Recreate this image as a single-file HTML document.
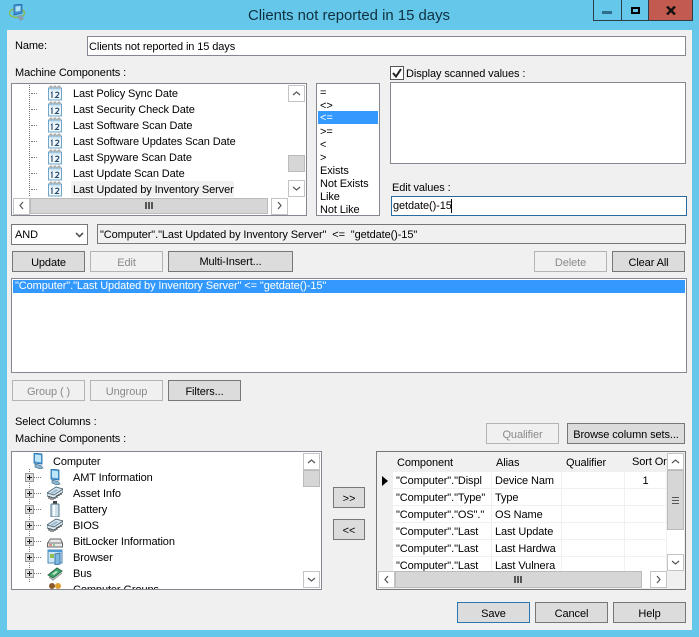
<!DOCTYPE html>
<html><head><meta charset="utf-8"><style>
html,body{margin:0;padding:0}
body{width:699px;height:637px;overflow:hidden;position:relative;background:#65c8ea;font:11px/13px "Liberation Sans",sans-serif;letter-spacing:-.1px;color:#000}
div,span,svg{position:absolute;box-sizing:border-box}
.t{white-space:nowrap}
.w{background:#fff;border:1px solid #828790}
.b{background:#dcdcdc;border:1px solid #777;text-align:center;line-height:23px;height:21px;white-space:nowrap}
.d{background:#f0f0f0;border-color:#b4b4b4;color:#8a8a8a}
.sb{background:#fff;border:1px solid #c4c4c4}
.th{background:#d6d6d6;border:1px solid #bbb}
.hl{background:#3399ff;color:#fff}
.v{border-left:1px dotted #777;width:1px}
.h{border-top:1px dotted #777;height:1px;width:6px}
.p{width:9px;height:9px;background:#dedede;border:1px solid #999}
.p:before{content:"";position:absolute;left:1px;top:3px;width:5px;height:1px;background:#222}
.p:after{content:"";position:absolute;left:3px;top:1px;height:5px;width:1px;background:#222}
.c{border-right:1px solid #f0f0f0;border-bottom:1px solid #f0f0f0;background:#fff;height:17px;overflow:hidden;white-space:nowrap;line-height:18px;padding-left:3px}
</style></head><body>
<svg width="0" height="0" style="left:0;top:0"><defs>
<symbol id="cal" viewBox="0 0 16 16"><rect x="1.500" y="3" width="13" height="12" fill="#eef7fc" stroke="#6fa5c6"/><rect x="2" y="3.500" width="12" height="2" fill="#cfe5f3"/><path d="M3 3V2q0-1 1-1t1 1v1M7 3V2q0-1 1-1t1 1v1M11 3V2q0-1 1-1t1 1v1" fill="none" stroke="#999"/><path d="M4 8l1-.8V13M8.500 8q.3-.8 1.700-.8t1.700 1.200q0 1-3.400 4.100h3.600" fill="none" stroke="#2c4a68" stroke-width="1.100"/></symbol>
<symbol id="mon" viewBox="0 0 16 16"><path d="M4 0l8 1v10l-8-1z" fill="#4a9fdc" stroke="#2c6a9c" stroke-width=".8"/><path d="M5 1.500l6 .8v7l-6-.8z" fill="#bfe6f8"/><path d="M5 11l6 1.500 2 2.500-3 1-5-2z" fill="#8fb7d0" stroke="#4a7895" stroke-width=".7"/></symbol>
<symbol id="chip" viewBox="0 0 16 16"><path d="M0 8l9-6 7 2v3l-9 6-7-2z" fill="#e4ebf0" stroke="#52707f"/><path d="M0 8l7 2 9-6" fill="none" stroke="#52707f"/><path d="M2 11v3M4 12v3M6 13v2M8 12v2M10 10v3M12 9v2M14 8v2" stroke="#333"/><path d="M3 8l6-4 3 1-6 4z" fill="#9fc0d4"/></symbol>
<symbol id="bat" viewBox="0 0 16 16"><rect x="6" y="0" width="4" height="3" fill="#444"/><rect x="4" y="3" width="8" height="13" rx="1" fill="#cfdfe8" stroke="#557a90"/><rect x="6" y="4" width="2" height="11" fill="#f5fafc"/></symbol>
<symbol id="drv" viewBox="0 0 16 16"><path d="M.5 10l3-4h10l2 4v4H.5z" fill="#e8e8e8" stroke="#666"/><path d="M.5 10h15" stroke="#777"/><path d="M2 12h3" stroke="#c33"/><path d="M6 12h2" stroke="#3a3"/></symbol>
<symbol id="brw" viewBox="0 0 16 16"><rect x="1" y="1" width="14" height="13" fill="#cfe6f5" stroke="#4c87b3"/><rect x="1" y="1" width="14" height="2" fill="#4c9ad4"/><rect x="3" y="5" width="4" height="4" fill="#8cc152"/><path d="M8 5l5-1v11l-5 1z" fill="#7db8e0" stroke="#3d7aa8"/></symbol>
<symbol id="bus" viewBox="0 0 16 16"><path d="M1 10l9-7 5 3-9 7z" fill="#3fa66b" stroke="#2c6b49"/><path d="M5 9l4-3 2 1-4 3z" fill="#bfe3cd"/><path d="M2 12l4 3 9-7" fill="none" stroke="#888"/></symbol>
</defs></svg>

<!-- title bar -->
<svg style="left:9px;top:4px" width="17" height="18" viewBox="0 0 17 18"><ellipse cx="8" cy="9" rx="7.500" ry="4.500" fill="none" stroke="#8fb84a" stroke-width="1.300"/><path d="M5 1l8-1v9l-8 2z" fill="#3f8fd2" stroke="#27639b" stroke-width=".7"/><path d="M6.500 2.500l5-.6v5l-5 .8z" fill="#aee0f6"/><path d="M8 12l5-1 2 4-4 2z" fill="#8a9eb0"/></svg>
<div class="t" style="left:248px;top:8px;font-size:14.9px;letter-spacing:0;line-height:17px;color:#10303f">Clients not reported in 15 days</div>
<div style="left:593px;top:-1px;width:100px;height:22px;border:1px solid #2c3e4a;background:#65c8ea"></div>
<div style="left:621px;top:0;width:1px;height:20px;background:#2c3e4a"></div>
<div style="left:648px;top:0;width:45px;height:21px;background:#c35a50;border:1px solid #2c3e4a;border-top:0"></div>
<div style="left:602px;top:11px;width:10px;height:3px;background:#2f6f8c"></div>
<div style="left:631px;top:7px;width:9px;height:7px;border:2px solid #000"></div>
<svg style="left:666px;top:6px" width="10" height="9" viewBox="0 0 10 9"><path d="M1 .5l8 8M9 .5l-8 8" stroke="#111" stroke-width="2.400"/></svg>

<!-- client -->
<div style="left:7px;top:30px;width:685px;height:600px;background:#f0f0f0"></div>

<div class="t" style="left:15px;top:40px">Name:</div>
<div class="w" style="left:87px;top:36px;width:599px;height:20px"></div>
<div class="t" style="left:89px;top:41px">Clients not reported in 15 days</div>
<div class="t" style="left:15px;top:67px">Machine Components :</div>

<!-- tree 1 -->
<div class="w" style="left:11px;top:83px;width:296px;height:133px"></div>
<div class="v" style="left:29px;top:85px;height:113px"></div>
<div class="h" style="left:31px;top:93px"></div><div class="h" style="left:31px;top:109px"></div><div class="h" style="left:31px;top:125px"></div><div class="h" style="left:31px;top:141px"></div><div class="h" style="left:31px;top:157px"></div><div class="h" style="left:31px;top:173px"></div><div class="h" style="left:31px;top:189px"></div>
<svg style="left:47px;top:85px" width="16" height="16"><use href="#cal"/></svg>
<svg style="left:47px;top:101px" width="16" height="16"><use href="#cal"/></svg>
<svg style="left:47px;top:117px" width="16" height="16"><use href="#cal"/></svg>
<svg style="left:47px;top:133px" width="16" height="16"><use href="#cal"/></svg>
<svg style="left:47px;top:149px" width="16" height="16"><use href="#cal"/></svg>
<svg style="left:47px;top:165px" width="16" height="16"><use href="#cal"/></svg>
<svg style="left:47px;top:181px" width="16" height="16"><use href="#cal"/></svg>
<div style="left:71px;top:181px;width:163px;height:16px;background:#f0f0f0"></div>
<div class="t" style="left:73px;top:88px">Last Policy Sync Date</div>
<div class="t" style="left:73px;top:104px">Last Security Check Date</div>
<div class="t" style="left:73px;top:120px">Last Software Scan Date</div>
<div class="t" style="left:73px;top:136px">Last Software Updates Scan Date</div>
<div class="t" style="left:73px;top:152px">Last Spyware Scan Date</div>
<div class="t" style="left:73px;top:168px">Last Update Scan Date</div>
<div class="t" style="left:73px;top:184px">Last Updated by Inventory Server</div>
<!-- tree1 v scroll -->
<div style="left:288px;top:85px;width:17px;height:112px;background:#fff"></div>
<div class="sb" style="left:288px;top:85px;width:17px;height:17px"></div>
<div class="th" style="left:288px;top:155px;width:17px;height:17px"></div>
<div class="sb" style="left:288px;top:180px;width:17px;height:17px"></div>
<svg style="left:292px;top:91px" width="9" height="5"><path d="M1 4l3.500-3L8 4" fill="none" stroke="#555" stroke-width="1.200"/></svg>
<svg style="left:292px;top:186px" width="9" height="5"><path d="M1 1l3.500 3L8 1" fill="none" stroke="#555" stroke-width="1.200"/></svg>
<!-- tree1 h scroll -->
<div style="left:13px;top:197px;width:275px;height:17px;background:#fff"></div>
<div class="sb" style="left:13px;top:198px;width:17px;height:17px"></div>
<div class="th" style="left:30px;top:198px;width:238px;height:16px"></div>
<div class="sb" style="left:271px;top:198px;width:17px;height:17px"></div>
<svg style="left:19px;top:201px" width="5" height="9"><path d="M4 1L1 4.500 4 8" fill="none" stroke="#555" stroke-width="1.200"/></svg>
<svg style="left:277px;top:201px" width="5" height="9"><path d="M1 1l3 3.500L1 8" fill="none" stroke="#555" stroke-width="1.200"/></svg>
<div style="left:145px;top:202px;width:8px;height:7px;border-left:2px solid #555;border-right:2px solid #555"></div>
<div style="left:148px;top:202px;width:2px;height:7px;background:#555"></div>

<!-- operators -->
<div class="w" style="left:316px;top:83px;width:64px;height:133px"></div>
<div class="hl" style="left:318px;top:111px;width:60px;height:13px"></div>
<div class="t" style="left:320px;top:87px">=</div>
<div class="t" style="left:320px;top:100px">&lt;&gt;</div>
<div class="t" style="left:320px;top:112px;color:#fff">&lt;=</div>
<div class="t" style="left:320px;top:126px">&gt;=</div>
<div class="t" style="left:320px;top:139px">&lt;</div>
<div class="t" style="left:320px;top:152px">&gt;</div>
<div class="t" style="left:320px;top:165px">Exists</div>
<div class="t" style="left:320px;top:178px">Not Exists</div>
<div class="t" style="left:320px;top:191px">Like</div>
<div class="t" style="left:320px;top:204px">Not Like</div>

<!-- display scanned -->
<div class="w" style="left:390px;top:66px;width:14px;height:14px;border-color:#555"></div>
<svg style="left:391px;top:67px" width="12" height="12"><path d="M2 6l3 3.500L10 2" fill="none" stroke="#222" stroke-width="2"/></svg>
<div class="t" style="left:406px;top:68px">Display scanned values :</div>
<div class="w" style="left:390px;top:82px;width:296px;height:82px"></div>
<div class="t" style="left:392px;top:182px">Edit values :</div>
<div class="w" style="left:391px;top:196px;width:296px;height:20px;border-color:#2b6a9e"></div>
<div class="t" style="left:393px;top:200px">getdate()-15</div>
<div style="left:451px;top:199px;width:1px;height:14px;background:#000"></div>

<!-- and row -->
<div class="w" style="left:11px;top:224px;width:77px;height:21px;border-color:#777"></div>
<div class="t" style="left:15px;top:229px">AND</div>
<svg style="left:75px;top:232px" width="9" height="6"><path d="M1 1l3.500 3.500L8 1" fill="none" stroke="#555" stroke-width="1.600"/></svg>
<div style="left:97px;top:224px;width:589px;height:20px;border:1px solid #777;background:#f0f0f0"></div>
<div class="t" style="left:100px;top:229px;white-space:pre">"Computer"."Last Updated by Inventory Server"  &lt;=  "getdate()-15"</div>

<div class="b" style="left:12px;top:251px;width:73px">Update</div>
<div class="b d" style="left:90px;top:251px;width:73px">Edit</div>
<div class="b" style="left:168px;top:251px;width:125px;line-height:21px">Multi-Insert...</div>
<div class="b d" style="left:534px;top:251px;width:73px">Delete</div>
<div class="b" style="left:612px;top:251px;width:73px">Clear All</div>

<div class="w" style="left:11px;top:278px;width:676px;height:95px"></div>
<div class="hl" style="left:13px;top:280px;width:672px;height:13px"></div>
<div class="t" style="left:15px;top:280px;color:#fff">"Computer"."Last Updated by Inventory Server" &lt;= "getdate()-15"</div>

<div class="b d" style="left:12px;top:380px;width:73px">Group ( )</div>
<div class="b d" style="left:90px;top:380px;width:73px">Ungroup</div>
<div class="b" style="left:168px;top:380px;width:73px">Filters...</div>

<div class="t" style="left:15px;top:416px">Select Columns :</div>
<div class="t" style="left:15px;top:433px">Machine Components :</div>
<div class="b d" style="left:486px;top:423px;width:73px">Qualifier</div>
<div class="b" style="left:567px;top:423px;width:118px">Browse column sets...</div>

<!-- tree 2 -->
<div class="w" style="left:11px;top:451px;width:311px;height:139px"></div>
<div class="v" style="left:29px;top:469px;height:119px"></div>
<svg style="left:30px;top:453px" width="16" height="16"><use href="#mon"/></svg>
<div class="t" style="left:53px;top:456px">Computer</div>
<div class="h" style="left:34px;top:477px;width:7px"></div><div class="h" style="left:34px;top:493px;width:7px"></div><div class="h" style="left:34px;top:509px;width:7px"></div><div class="h" style="left:34px;top:525px;width:7px"></div><div class="h" style="left:34px;top:541px;width:7px"></div><div class="h" style="left:34px;top:557px;width:7px"></div><div class="h" style="left:34px;top:573px;width:7px"></div>
<div class="p" style="left:25px;top:473px"></div>
<div class="p" style="left:25px;top:489px"></div>
<div class="p" style="left:25px;top:505px"></div>
<div class="p" style="left:25px;top:521px"></div>
<div class="p" style="left:25px;top:537px"></div>
<div class="p" style="left:25px;top:553px"></div>
<div class="p" style="left:25px;top:569px"></div>
<svg style="left:47px;top:469px" width="16" height="16"><use href="#mon"/></svg>
<svg style="left:47px;top:485px" width="16" height="16"><use href="#chip"/></svg>
<svg style="left:47px;top:501px" width="16" height="16"><use href="#bat"/></svg>
<svg style="left:47px;top:517px" width="16" height="16"><use href="#chip"/></svg>
<svg style="left:47px;top:533px" width="16" height="16"><use href="#drv"/></svg>
<svg style="left:47px;top:549px" width="16" height="16"><use href="#brw"/></svg>
<svg style="left:47px;top:565px" width="16" height="16"><use href="#bus"/></svg>
<div class="t" style="left:73px;top:472px">AMT Information</div>
<div class="t" style="left:73px;top:488px">Asset Info</div>
<div class="t" style="left:73px;top:504px">Battery</div>
<div class="t" style="left:73px;top:520px">BIOS</div>
<div class="t" style="left:73px;top:536px">BitLocker Information</div>
<div class="t" style="left:73px;top:552px">Browser</div>
<div class="t" style="left:73px;top:568px">Bus</div>
<div style="left:12px;top:582px;width:290px;height:7px;overflow:hidden;background:#fff">
  <div class="t" style="left:61px;top:2px">Computer Groups</div>
  <svg style="left:35px;top:0" width="16" height="16" viewBox="0 0 16 16"><circle cx="5" cy="4" r="3" fill="#8a5a2b"/><circle cx="11" cy="4" r="3" fill="#e0a030"/></svg>
</div>
<div style="left:303px;top:453px;width:17px;height:135px;background:#fff"></div>
<div class="sb" style="left:303px;top:453px;width:17px;height:17px"></div>
<div class="th" style="left:303px;top:470px;width:17px;height:17px"></div>
<div class="sb" style="left:303px;top:571px;width:17px;height:17px"></div>
<svg style="left:307px;top:459px" width="9" height="5"><path d="M1 4l3.500-3L8 4" fill="none" stroke="#555" stroke-width="1.200"/></svg>
<svg style="left:307px;top:577px" width="9" height="5"><path d="M1 1l3.500 3L8 1" fill="none" stroke="#555" stroke-width="1.200"/></svg>

<div class="b" style="left:333px;top:487px;width:32px">&gt;&gt;</div>
<div class="b" style="left:333px;top:519px;width:32px">&lt;&lt;</div>

<!-- grid -->
<div style="left:376px;top:451px;width:310px;height:139px;border:1px solid #777;background:#f0f0f0"></div>
<div class="t" style="left:397px;top:457px">Component</div>
<div class="t" style="left:496px;top:457px">Alias</div>
<div class="t" style="left:566px;top:457px">Qualifier</div>
<div style="left:632px;top:456px;width:35px;height:14px;overflow:hidden"><div class="t" style="left:0;top:0">Sort Order</div></div>
<svg style="left:382px;top:476px" width="7" height="10"><path d="M0 0l6 5-6 5z" fill="#000"/></svg>

<div style="left:377px;top:472px;width:290px;height:99px;overflow:hidden">
<div class="c" style="left:16px;top:0;width:99px">"Computer"."Displ</div><div class="c" style="left:115px;top:0;width:70px">Device Nam</div><div class="c" style="left:185px;top:0;width:63px"></div><div class="c" style="left:248px;top:0;width:42px;text-align:center;padding:0">1</div>
<div class="c" style="left:16px;top:17px;width:99px">"Computer"."Type"</div><div class="c" style="left:115px;top:17px;width:70px">Type</div><div class="c" style="left:185px;top:17px;width:63px"></div><div class="c" style="left:248px;top:17px;width:42px"></div>
<div class="c" style="left:16px;top:34px;width:99px">"Computer"."OS"."</div><div class="c" style="left:115px;top:34px;width:70px">OS Name</div><div class="c" style="left:185px;top:34px;width:63px"></div><div class="c" style="left:248px;top:34px;width:42px"></div>
<div class="c" style="left:16px;top:51px;width:99px">"Computer"."Last</div><div class="c" style="left:115px;top:51px;width:70px">Last Update</div><div class="c" style="left:185px;top:51px;width:63px"></div><div class="c" style="left:248px;top:51px;width:42px"></div>
<div class="c" style="left:16px;top:68px;width:99px">"Computer"."Last</div><div class="c" style="left:115px;top:68px;width:70px">Last Hardwa</div><div class="c" style="left:185px;top:68px;width:63px"></div><div class="c" style="left:248px;top:68px;width:42px"></div>
<div class="c" style="left:16px;top:85px;width:99px">"Computer"."Last</div><div class="c" style="left:115px;top:85px;width:70px">Last Vulnera</div><div class="c" style="left:185px;top:85px;width:63px"></div><div class="c" style="left:248px;top:85px;width:42px"></div>
</div>
<div style="left:667px;top:453px;width:17px;height:118px;background:#fff"></div>
<div class="sb" style="left:667px;top:453px;width:17px;height:17px"></div>
<div class="th" style="left:667px;top:470px;width:17px;height:60px"></div>
<div class="sb" style="left:667px;top:554px;width:17px;height:17px"></div>
<svg style="left:671px;top:459px" width="9" height="5"><path d="M1 4l3.500-3L8 4" fill="none" stroke="#555" stroke-width="1.200"/></svg>
<svg style="left:671px;top:560px" width="9" height="5"><path d="M1 1l3.500 3L8 1" fill="none" stroke="#555" stroke-width="1.200"/></svg>
<div style="left:672px;top:497px;width:7px;height:7px;border-top:1px solid #555;border-bottom:1px solid #555"></div>
<div style="left:672px;top:500px;width:7px;height:1px;background:#555"></div>
<div style="left:378px;top:571px;width:288px;height:17px;background:#fff"></div>
<div class="sb" style="left:378px;top:571px;width:17px;height:17px"></div>
<div class="th" style="left:395px;top:571px;width:247px;height:17px"></div>
<div class="sb" style="left:650px;top:571px;width:17px;height:17px"></div>
<svg style="left:384px;top:575px" width="5" height="9"><path d="M4 1L1 4.500 4 8" fill="none" stroke="#555" stroke-width="1.200"/></svg>
<svg style="left:656px;top:575px" width="5" height="9"><path d="M1 1l3 3.500L1 8" fill="none" stroke="#555" stroke-width="1.200"/></svg>
<div style="left:514px;top:576px;width:8px;height:7px;border-left:2px solid #555;border-right:2px solid #555"></div>
<div style="left:517px;top:576px;width:2px;height:7px;background:#555"></div>

<div class="b" style="left:457px;top:602px;width:73px;border-color:#2b75b0">Save</div>
<div class="b" style="left:535px;top:602px;width:73px">Cancel</div>
<div class="b" style="left:613px;top:602px;width:73px">Help</div>
</body></html>
